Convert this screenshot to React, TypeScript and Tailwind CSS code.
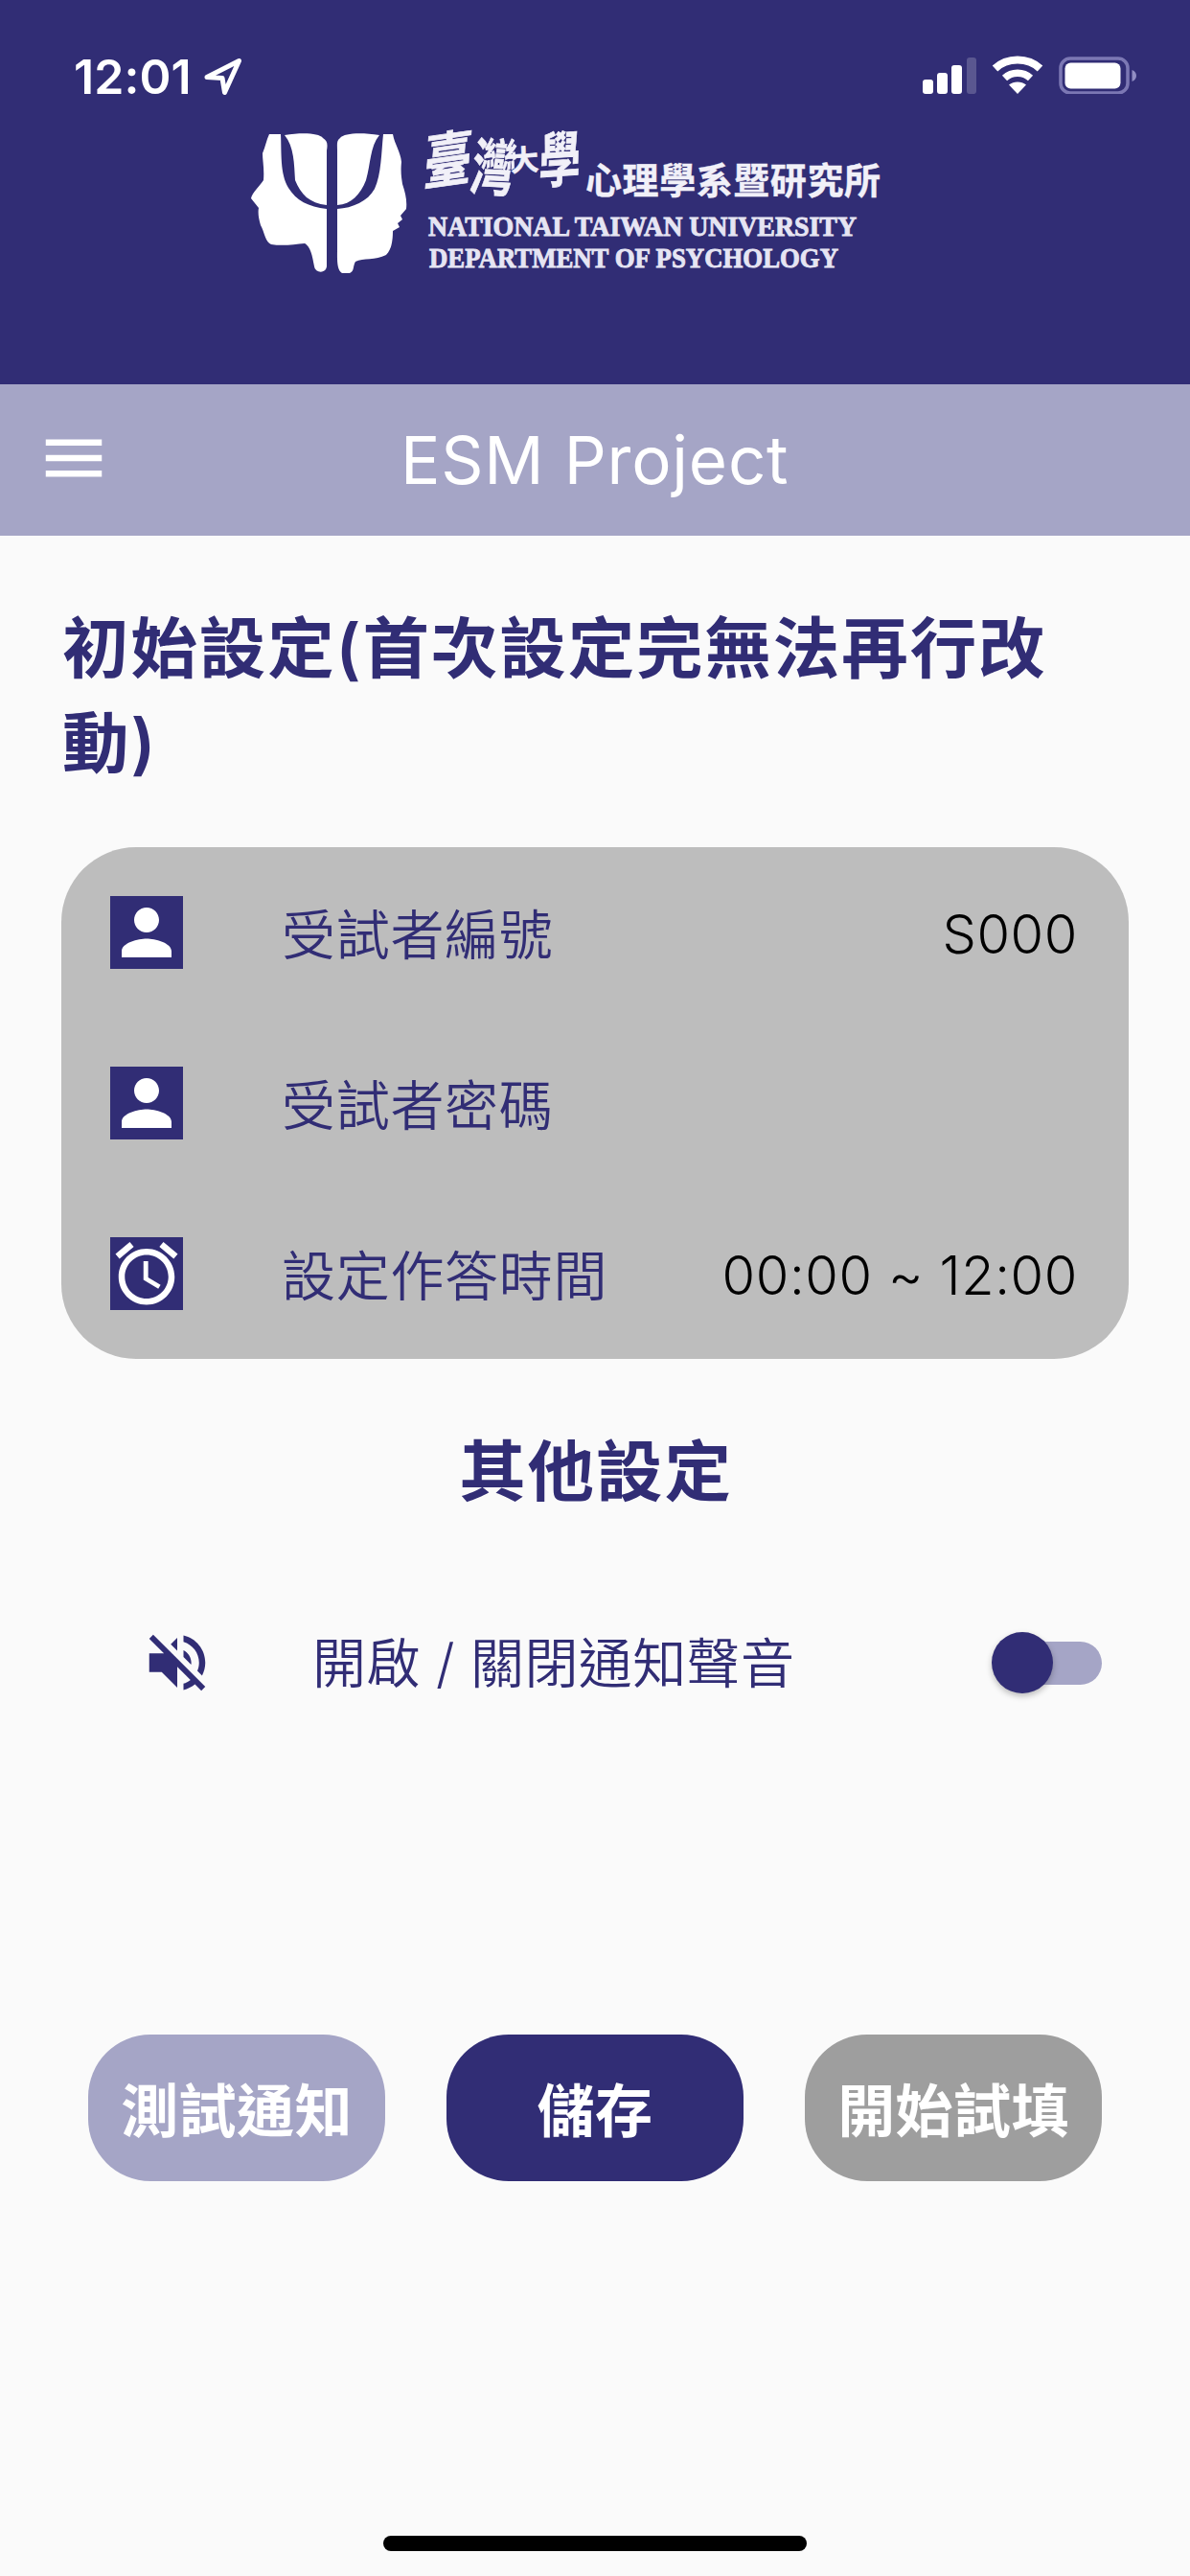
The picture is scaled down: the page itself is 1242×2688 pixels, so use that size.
import React from "react";

const latin = "font-['Inter','Noto_Sans_CJK_TC',sans-serif]";
const cjk = "font-['Noto_Sans_CJK_TC',sans-serif]";

const glyph: Record<string, string> = {
  menu: "M3 18h18v-2H3v2zm0-5h18v-2H3v2zm0-7v2h18V6H3z",
  person:
    "M12 12c2.21 0 4-1.79 4-4s-1.79-4-4-4-4 1.79-4 4 1.79 4 4 4zm0 2c-2.67 0-8 1.34-8 4v2h16v-2c0-2.66-5.33-4-8-4z",
  alarm:
    "M22 5.72l-4.6-3.86-1.29 1.53 4.6 3.86L22 5.72zM7.88 3.39L6.6 1.86 2 5.71l1.29 1.53 4.59-3.85zM12.5 8H11v6l4.75 2.85.75-1.23-4-2.37V8zM12 4c-4.97 0-9 4.03-9 9s4.02 9 9 9c4.97 0 9-4.03 9-9s-4.03-9-9-9zm0 16c-3.87 0-7-3.13-7-7s3.13-7 7-7 7 3.13 7 7-3.13 7-7 7z",
  volumeOff:
    "M16.5 12c0-1.77-1.02-3.29-2.5-4.03v2.21l2.45 2.45c.03-.2.05-.41.05-.63zm2.5 0c0 .94-.2 1.82-.54 2.64l1.51 1.51C20.63 14.91 21 13.5 21 12c0-4.28-2.99-7.86-7-8.77v2.06c2.89.86 5 3.54 5 6.71zM4.27 3L3 4.27 7.73 9H3v6h4l5 5v-6.73l4.25 4.25c-.67.52-1.42.93-2.25 1.18v2.06c1.38-.31 2.63-.95 3.69-1.81L19.73 21 21 19.73l-9-9L4.27 3zM12 4L9.91 6.09 12 8.18V4z",
};

function Icon({ name, className }: { name: string; className: string }) {
  return (
    <svg viewBox="0 0 24 24" className={className} fill="currentColor">
      <path d={glyph[name]} />
    </svg>
  );
}

function StatusBar() {
  return (
    <div className="flex h-[120px] items-start justify-between pl-[77px] pr-[55px] text-white">
      <div className="flex pt-[56px]">
        <span className={`${latin} w-[122px] whitespace-nowrap text-[50px] font-semibold leading-[48px] tracking-[0.1px]`}>12:01</span>
        <svg className="ml-[13px] mt-[4px] h-[42px] w-[42px]" viewBox="0 0 42 42" fill="none" stroke="white" strokeWidth="5" strokeLinejoin="round">
          <path d="M4 20.500L37.500 3.500L22.500 36.500L20 21.500Z" />
        </svg>
      </div>
      <div className="flex items-center pt-[56px]">
        <svg className="h-[42px] w-[56px]" viewBox="0 0 56 42" fill="white">
          <rect x="0" y="27" width="11" height="15" rx="3" />
          <rect x="15" y="20" width="11" height="22" rx="3" />
          <rect x="30" y="12" width="11" height="30" rx="3" />
          <rect x="46" y="4" width="10" height="38" rx="3" opacity="0.2" />
        </svg>
        <svg className="ml-[16px] h-[42px] w-[54px]" viewBox="0 0 54 42" fill="none" stroke="white">
          <path d="M3.500 15.500C16 3.500 38 3.500 50.500 15.500" strokeWidth="8" />
          <path d="M13.500 25.500C21 18.500 33 18.500 40.500 25.500" strokeWidth="7.500" />
          <path d="M27 42L18 32.500C23 28.500 31 28.500 36 32.500Z" fill="white" stroke="none" />
        </svg>
        <svg className="ml-[16px] h-[42px] w-[82px]" viewBox="0 0 82 42">
          <rect x="2" y="5" width="70" height="36" rx="10" fill="none" stroke="#7c78b4" strokeWidth="3.500" />
          <rect x="6.500" y="9.500" width="58" height="27" rx="6" fill="white" />
          <path d="M76.500 17v12c6-2 6-10 0-12z" fill="#918ec4" />
        </svg>
      </div>
    </div>
  );
}

function PsiHeads() {
  return (
    <svg className="h-[148px] w-[164px]" viewBox="0 0 164 148" fill="white">
      <path d="M20 1H32C33 20 31 42 40 57C48 70 61 77 80 79V139C79 147 68 146 67 139C65 128 63 118 57 115C46 116 34 118 22 116C16 114 15 103 11 96C9 89 8 83 9 78L1 68C2 62 11 54 14 49C15 37 13 29 13 21C16 14 17 7 20 1Z" />
      <path d="M36 2C55-1 72 0 76 5C81 8 81 12 80 18V75C62 73 53 64 47 49C46 32 46 14 36 2Z" />
      <path d="M135 2C115-1 98 0 94 5C90 8 91 12 91 18V75C106 74 115 64 121 49C126 32 125 14 135 2Z" />
      <path d="M139 1H149C151 12 157 19 158 30C157 41 158 46 159 53C162 62 164 70 163 79L157 86L159 90L154 94L156 98L149 102C149 111 148 121 142 127C131 133 118 130 110 134C107 139 109 144 104 146H96C90 143 91 130 91 120V79C107 78 123 71 130 58C137 43 137 20 139 1Z" />
    </svg>
  );
}

/* University wordmark, with headroom above the large characters. */
function Wordmark() {
  return (
    <svg className="-mt-[50px] ml-[7px] h-[210px] w-[500px]" viewBox="0 -40 500 210" fill="#f1f0f8" stroke="#f1f0f8">
      <g fontFamily="Noto Sans CJK TC, sans-serif" fontWeight="700" strokeWidth="0.6">
        <text fontSize="54" transform="translate(9 64) rotate(-8) skewX(-12) scale(0.94 1.14)">臺</text>
        <text fontSize="48" transform="translate(57 68) rotate(3) skewX(-6) scale(0.95 1.35)">灣</text>
        <text fontSize="30" transform="translate(101 50) rotate(-4)">大</text>
        <text fontSize="48" transform="translate(130 62) rotate(-4) skewX(-6) scale(0.9 1.3)">學</text>
        <text fontSize="38" x="179" y="73" textLength="308" strokeWidth="0.4">心理學系暨研究所</text>
      </g>
      <g fontFamily="Liberation Serif, serif" fontWeight="700" fontSize="29" strokeWidth="0.9" fill="#e6e5f3" stroke="#e6e5f3">
        <text x="15" y="117" textLength="447" lengthAdjust="spacingAndGlyphs">NATIONAL TAIWAN UNIVERSITY</text>
        <text x="16" y="150" textLength="427" lengthAdjust="spacingAndGlyphs">DEPARTMENT OF PSYCHOLOGY</text>
      </g>
    </svg>
  );
}

function SettingRow({ icon, label, value }: { icon: string; label: string; value?: string }) {
  return (
    <div className="flex h-[178px] items-center pl-[51px] pr-[53px]">
      <div className="flex size-[76px] items-center justify-center bg-[#312d75] text-white">
        <Icon name={icon} className="size-[78px] shrink-0" />
      </div>
      <span className={`${cjk} -mt-[2px] ml-[103px] text-[56px] font-[350] leading-none tracking-[0.7px] text-[#312d75]`}>{label}</span>
      <span className={`${latin} ml-auto mt-[4px] text-[56px] font-[340] leading-none tracking-[0.6px] text-black`}>{value}</span>
    </div>
  );
}

export default function App() {
  return (
    <div className={`${cjk} flex h-[2688px] w-[1242px] flex-col bg-[#fafafa] text-[#312d75]`}>
      <header className="h-[401px] bg-[#312d75]">
        <StatusBar />
        <div className="flex h-[200px] pl-[261px] pt-[19px]">
          <PsiHeads />
          <Wordmark />
        </div>
      </header>
      <div className="flex h-[158px] items-center bg-[#a5a5c6] text-white">
        <Icon name="menu" className="-mt-[4px] ml-[38px] size-[78px]" />
        <h1 className={`${latin} ml-[302px] whitespace-nowrap text-[69px] leading-none tracking-[0.8px]`}>ESM Project</h1>
      </div>
      <h2 className={`${latin} ml-[65px] mr-[60px] mt-[69px] text-[69.500px] font-semibold leading-[99px] tracking-[1.900px]`}>初始設定(首次設定完無法再行改動)</h2>
      <section className="mx-[64px] mt-[58px] rounded-[78px] bg-[#bdbdbd]">
        <SettingRow icon="person" label="受試者編號" value="S000" />
        <SettingRow icon="person" label="受試者密碼" />
        <SettingRow icon="alarm" label="設定作答時間" value="00:00 ~ 12:00" />
      </section>
      <h2 className="-mb-[4px] mt-[63px] pl-[2px] text-center text-[69.500px] font-semibold leading-[99px] tracking-[1.900px]">其他設定</h2>
      <div className="mt-[100px] flex h-[118px] items-center pl-[146px] pr-[92px]">
        <Icon name="volumeOff" className="size-[78px]" />
        <span className={`${latin} ml-[102px] mt-[2px] whitespace-nowrap text-[56px] font-[350] leading-none tracking-[0.4px]`}>開啟 / 關閉通知聲音</span>
        <div className="ml-auto flex h-[45px] w-[107px] items-center rounded-full bg-[#a5a5c6]">
          <div className="-ml-[8px] size-[64px] shrink-0 rounded-full bg-[#312d75] shadow-[0_3px_6px_rgba(0,0,0,0.25)]" />
        </div>
      </div>
      <div className="mt-[329px] flex gap-[64px] px-[92px] text-[60px] font-bold tracking-[0.4px] text-white">
        <button className="h-[153px] w-[310px] rounded-[65px] bg-[#a5a5c6] pb-[2px]">測試通知</button>
        <button className="h-[153px] w-[310px] rounded-[65px] bg-[#312d75] pb-[2px]">儲存</button>
        <button className="h-[153px] w-[310px] rounded-[65px] bg-[#9e9e9e] pb-[2px]">開始試填</button>
      </div>
      <div className="mx-auto mb-[26px] mt-auto h-[16px] w-[442px] rounded-full bg-black" />
    </div>
  );
}
